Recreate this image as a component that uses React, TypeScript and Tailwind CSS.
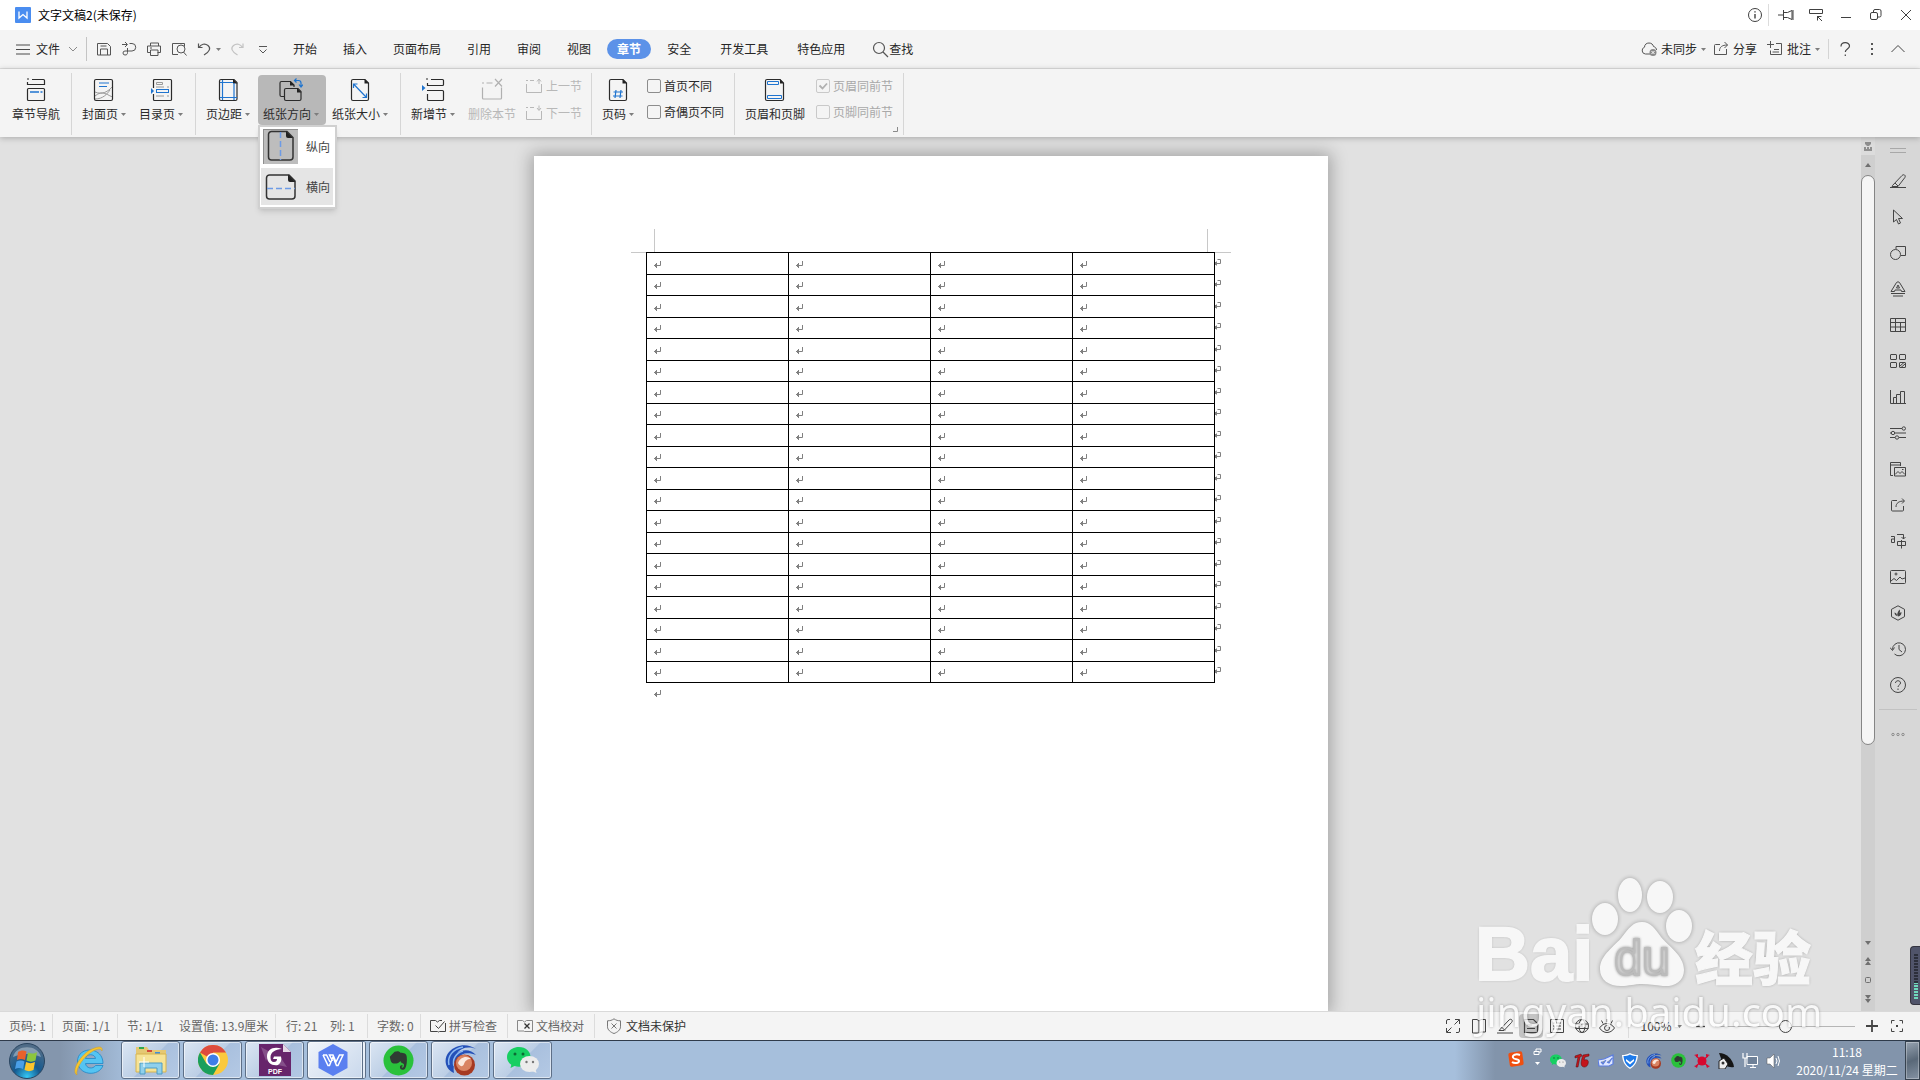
import React from 'react';

type IconProps = { size?: number; w?: number; h?: number; className?: string; children: React.ReactNode };

const Icon = ({ size = 16, w, h, className = '', children }: IconProps) => (
  <svg
    width={w ?? size}
    height={h ?? size}
    viewBox={`0 0 ${w ?? size} ${h ?? size}`}
    fill="none"
    stroke="currentColor"
    aria-hidden="true"
    className={`shrink-0 ${className}`}
  >
    {children}
  </svg>
);

const Caret = ({ className = 'text-[#7d7d7d]' }: { className?: string }) => (
  <Icon w={5} h={3} className={className}>
    <path d="M0 0h5L2.5 3z" fill="currentColor" stroke="none" />
  </Icon>
);

const BLUE = '#1f74cf';

/* ---------- title bar ---------- */

const TitleBar = () => (
  <header className="flex h-[30px] shrink-0 items-center bg-white pl-[15px] pr-[6px] text-[#404040]">
    <svg width="16" height="16" viewBox="0 0 16 16" aria-hidden="true">
      <rect width="16" height="16" rx="1" fill="#4a8df0" />
      <path d="M4 4.5v6.5l4-3.5 4 3.5V4.5" fill="none" stroke="#fff" strokeWidth="1.3" />
    </svg>
    <h1 className="ml-[7px] pb-px text-xs text-black">文字文稿2(未保存)</h1>
    <div className="ml-auto flex items-center">
      <button aria-label="信息" className="w-[21px]">
        <Icon>
          <circle cx="8" cy="8" r="6.5" />
          <path d="M8 7v4.5M8 4.2v1.4" strokeWidth="1.4" />
        </Icon>
      </button>
      <span className="h-[22px] w-px bg-[#dcdcdc]" />
      <button aria-label="固定" className="ml-[9px] w-[30px]">
        <Icon>
          <path d="M0 8h5M5.500 3v10M5.500 5.500h4l4.500-2v9l-4.500-2h-4M15 3v10" />
        </Icon>
      </button>
      <button aria-label="界面" className="w-[30px]">
        <Icon>
          <path d="M1.500 2.500h13v4h-13zM9 9.500h4.500M9.500 9.500v4M9.500 9.500l4.500 4.500" />
        </Icon>
      </button>
      <button aria-label="最小化" className="w-[30px]">
        <Icon>
          <path d="M3 10.500h10" />
        </Icon>
      </button>
      <button aria-label="还原" className="w-[30px]">
        <Icon>
          <rect x="2.500" y="5.500" width="7" height="7" rx="1.500" />
          <path d="M5.500 5V4a1.500 1.500 0 0 1 1.500-1.500h4.500A1.500 1.500 0 0 1 13 4v4.500a1.500 1.500 0 0 1-1.500 1.500H10" />
        </Icon>
      </button>
      <button aria-label="关闭" className="w-[16px]">
        <Icon>
          <path d="M3 3l10 10M13 3L3 13" />
        </Icon>
      </button>
    </div>
  </header>
);

/* ---------- menu bar ---------- */

const tabs = [
  { name: '开始' },
  { name: '插入' },
  { name: '页面布局' },
  { name: '引用' },
  { name: '审阅' },
  { name: '视图' },
  { name: '章节', active: true },
  { name: '安全' },
  { name: '开发工具', wide: true },
  { name: '特色应用', wide: true },
];

const MenuBar = () => (
  <nav className="flex h-[39px] shrink-0 items-center border-b border-[#dfdfdf] bg-[#f4f4f4] pl-[15px] pr-[14px] text-xs text-[#262626]">
    <button className="flex items-center gap-[5px]">
      <Icon className="text-[#4a4a4a]">
        <path d="M1 4h14M1 8.500h14M1 13h14" />
      </Icon>
      文件
      <Icon w={10} h={6} className="ml-[3px] text-[#8a8a8a]">
        <path d="M1 1l4 4 4-4" />
      </Icon>
    </button>
    <span className="ml-[8px] h-6 w-px bg-[#c4c4c4]" />
    <div className="ml-[9px] flex items-center gap-[9px] text-[#555]">
      <button aria-label="保存">
        <Icon>
          <path d="M1.500 2.500h10l3 3v8.500h-13zM4.500 14V8h7v6M4.500 5h6" />
        </Icon>
      </button>
      <button aria-label="输出">
        <Icon>
          <path d="M1 3.500h5M4 1l2.500 2.500L4 6M8.500 2.500h2.500a3.700 3.700 0 0 1 0 7.500H4a2 2 0 1 0 0 4c2 0 2.500-1 2.500-2.500V7" />
        </Icon>
      </button>
      <button aria-label="打印">
        <Icon>
          <path d="M4.500 5V2h8v3M4.500 11.500h-3v-6.500h13v6.500h-3M4.500 9h7.500v5.500H4.500zM4 7h2" />
        </Icon>
      </button>
      <button aria-label="打印预览">
        <Icon>
          <path d="M7 13.500H1.500v-11h12v3M12.500 11l3 3.500" />
          <circle cx="10" cy="8" r="4" />
        </Icon>
      </button>
      <button aria-label="撤销" className="flex items-center gap-1">
        <Icon>
          <path d="M2.500 2.500v4h4M3 6.500C5 3 9 2 12 4.500s2 6-4 9.500" strokeWidth="1.200" />
        </Icon>
        <Caret />
      </button>
      <button aria-label="恢复" className="text-[#c2c2c2]">
        <Icon>
          <path d="M13 2.500v4H9M12.500 6.500C10.500 3 6.500 2 3.500 4.500s-2 6 4 9.500" strokeWidth="1.200" />
        </Icon>
      </button>
      <button aria-label="更多">
        <Icon>
          <path d="M4 5.500h8M4.500 8.500l3.500 3.500 3.500-3.500" />
        </Icon>
      </button>
    </div>
    <div className="ml-[9px] flex items-center">
      {tabs.map((tab) => (
        <button
          key={tab.name}
          className={
            tab.active
              ? 'mx-[3px] h-5 rounded-full bg-[#5c92e8] px-[10px] font-bold text-white'
              : tab.wide
                ? 'h-5 pl-4 pr-[13px]'
                : 'h-5 px-[13px]'
          }
        >
          {tab.name}
        </button>
      ))}
    </div>
    <button className="ml-[14px] flex items-center">
      <Icon w={17} h={17} className="text-[#555]">
        <circle cx="7" cy="7" r="5.500" strokeWidth="1.200" />
        <path d="M11 11l5 5" strokeWidth="1.300" />
      </Icon>
      查找
    </button>

    <div className="ml-auto flex items-center">
      <button className="flex items-center gap-1">
        <Icon className="text-[#555]">
          <path d="M9 13H4.500a3.500 3.500 0 0 1-1-6.800C3.500 3.500 5.500 2 8 2s4 1.500 4.500 3.500c2 .5 3 2 3 3.500" />
          <circle cx="12" cy="11.500" r="3.500" fill="#888" stroke="none" />
          <path d="M10.500 10l3 3M13.500 10l-3 3" stroke="#fff" />
        </Icon>
        未同步
        <Caret />
      </button>
      <button className="ml-[7px] flex items-center gap-1">
        <Icon className="text-[#555]">
          <path d="M7 3.500H2.500a1 1 0 0 0-1 1v9h12V8M6.500 10c0-4 2.500-6 8-6M11.500 1l3 3-3 3" />
        </Icon>
        分享
      </button>
      <button className="ml-[10px] flex items-center gap-1">
        <Icon className="text-[#555]">
          <path d="M3.500 0v7M0 3.500h7M9 2.500h5.500v11h-11V9.500M7 8.500h5M5.500 11h6.500" />
        </Icon>
        批注
        <Caret />
      </button>
      <span className="ml-2 h-5 w-px bg-[#d4d4d4]" />
      <button aria-label="帮助" className="ml-2">
        <Icon>
          <path d="M4 5.500c0-5 8.500-5 8.500-.5 0 3-4.200 3-4.200 6M8.300 13.500V15" stroke="#444" strokeWidth="1.200" />
        </Icon>
      </button>
      <button aria-label="更多选项" className="ml-[11px]">
        <Icon>
          <path d="M7 2h2v2H7zM7 7h2v2H7zM7 12h2v2H7z" fill="#555" stroke="none" />
        </Icon>
      </button>
      <button aria-label="收起功能区" className="ml-[10px]">
        <Icon>
          <path d="M1.500 11L8 4.500l6.500 6.500" stroke="#444" />
        </Icon>
      </button>
    </div>
  </nav>
);

/* ---------- ribbon ---------- */

const BigButton = ({
  label,
  caret,
  className,
  children,
  disabled,
}: {
  label: string;
  caret?: boolean;
  className: string;
  children: React.ReactNode;
  disabled?: boolean;
}) => (
  <button
    disabled={disabled}
    className={`flex h-[50px] flex-col items-center rounded-[4px] pt-[3px] disabled:text-[#b8b8b8] ${className}`}
  >
    <Icon size={24}>{children}</Icon>
    <span className="mt-[2px] flex items-center gap-[3px] whitespace-nowrap text-xs leading-5">
      {label}
      {caret && <Caret />}
    </span>
  </button>
);

const Check = ({ label, checked, disabled }: { label: string; checked?: boolean; disabled?: boolean }) => (
  <label className={`flex items-center gap-[3px] text-xs leading-5 ${disabled ? 'text-[#a9a9a9]' : ''}`}>
    <span className="grid">
      <input
        type="checkbox"
        defaultChecked={checked}
        disabled={disabled}
        className="col-start-1 row-start-1 size-[14px] appearance-none rounded-[2px] border border-[#8c8c8c] disabled:border-[#c9c9c9]"
      />
      {checked && (
        <Icon size={14} className="col-start-1 row-start-1 text-[#b0b0b0]">
          <path d="M3.500 6.500l3 3 4.500-5" strokeWidth="1.800" />
        </Icon>
      )}
    </span>
    {label}
  </label>
);

const group = 'flex h-[62px] items-start border-r border-[#d6d6d6] pt-[2px]';

const OrientationMenu = () => (
  <ul className="absolute left-0 top-full z-20 w-[79px] border-2 border-[#d0d0d0] bg-white pb-[2px] pl-px pr-[2px] pt-px shadow-md">
    <li>
      <button className="flex h-[37px] w-full items-center gap-2 pl-[2px] text-xs text-[#444]">
        <span className="flex h-[35px] w-[35px] justify-center border-l border-t border-[#8f8f8f] bg-[#bdbdbd]">
          <Icon w={28} h={32} className="text-[#333]">
            <path d="M4.500 1.500H20l6 6V27a3 3 0 0 1-3 3H4.500a3 3 0 0 1-3-3V4.500a3 3 0 0 1 3-3z" strokeWidth="1.500" />
            <path d="M19 1l7 7h-5a2 2 0 0 1-2-2z" fill="#222" stroke="none" />
            <path d="M13.500 2v28" stroke="#6d9be6" strokeWidth="1.500" strokeDasharray="6 3" />
          </Icon>
        </span>
        纵向
      </button>
    </li>
    <li className="mt-[3px]">
      <button className="flex h-[37px] w-full items-center gap-2 bg-[#e5e5e5] pl-[2px] text-xs text-[#444]">
        <span className="flex w-[35px] justify-center">
          <Icon w={32} h={28} className="text-[#333]">
            <path d="M4.500 2H24l6 6v15a3 3 0 0 1-3 3H4.500a3 3 0 0 1-3-3V5a3 3 0 0 1 3-3z" strokeWidth="1.500" />
            <path d="M23 1.500L30.500 9H25a2 2 0 0 1-2-2z" fill="#222" stroke="none" />
            <path d="M2 15.500h28" stroke="#6d9be6" strokeWidth="1.500" strokeDasharray="6 3" />
          </Icon>
        </span>
        横向
      </button>
    </li>
  </ul>
);

const Ribbon = () => (
  <section className="relative z-10 flex h-[68px] shrink-0 items-start bg-[#f4f4f4] pt-1 text-[#2b2b2b] shadow-[0_1px_6px_rgba(0,0,0,0.25)]">
    <div className={`${group} w-[72px] pl-px`}>
      <BigButton label="章节导航" className="w-full">
        <path d="M3 1h2M8 1.500h11.500a1 1 0 0 1 1 1v4h-17V4" strokeWidth="1.200" />
        <rect x="3.500" y="10.500" width="17" height="12" rx="1" strokeWidth="1.200" />
        <path d="M6 14h9M16.500 14h2" stroke={BLUE} strokeWidth="1.400" />
      </BigButton>
    </div>
    <div className={`${group} w-[124px] pl-1`}>
      <BigButton label="封面页" caret className="w-14">
        <path d="M3 14c7 3 13 0 18-6M3 18c8-7 13 0 18 1M3 21c8 0 12-5 15-9" stroke="#9a9a9a" />
        <rect x="2.500" y="1.500" width="18" height="21" rx="1.500" strokeWidth="1.200" />
        <path d="M7 5h10M7 8.500h8" stroke={BLUE} strokeWidth="1.200" />
      </BigButton>
      <BigButton label="目录页" caret className="w-[58px]">
        <path d="M4.500 10V2.500a1 1 0 0 1 1-1h16a1 1 0 0 1 1 1v19a1 1 0 0 1-1 1h-16a1 1 0 0 1-1-1V16" strokeWidth="1.200" />
        <path d="M7.500 4.500h6v2h-6zM7 9h8M18 9h2M7 18h8M18 18h2" stroke="#9a9a9a" />
        <rect x="7.500" y="11.500" width="12" height="3" stroke={BLUE} />
        <path d="M2 10l3 3-3 3z" fill={BLUE} stroke="none" />
      </BigButton>
    </div>
    <div className={`${group} w-[205px] pl-1`}>
      <BigButton label="页边距" caret className="w-14">
        <path d="M5 1.500h13l3 3V21a1.500 1.500 0 0 1-1.500 1.500H5A1.500 1.500 0 0 1 3.500 21V3A1.500 1.500 0 0 1 5 1.500z" strokeWidth="1.200" />
        <path d="M17 1l4.500 4.500H17z" fill="#222" stroke="none" />
        <path d="M6.500 2v20M18 5v17M4 4.500h13M4 19.500h17" stroke={BLUE} strokeWidth="1.200" />
      </BigButton>
      <div className="relative ml-[2px]">
        <BigButton label="纸张方向" caret className="w-[68px] bg-[#b8b8b8] pr-[2px]">
          <path d="M5 18.500H2.500A1.500 1.500 0 0 1 1 17V5a1.500 1.500 0 0 1 1.500-1.500h9L15 7v2" strokeWidth="1.200" />
          <path d="M11 3l4.500 4.500H11z" fill="#222" stroke="none" />
          <path d="M7 10.500h12l3 3V21a1.500 1.500 0 0 1-1.500 1.500H7A1.500 1.500 0 0 1 5.500 21v-9A1.500 1.500 0 0 1 7 10.500z" strokeWidth="1.200" />
          <path d="M18 10l4.500 4.500H18z" fill="#222" stroke="none" />
          <path d="M16 2.500h3.500a2.500 2.500 0 0 1 2.500 2.500v3.500M17.500.5l-2 2 2 2M20 6.500l2 2.500 2-2.500" stroke={BLUE} strokeWidth="1.200" />
        </BigButton>
        <OrientationMenu />
      </div>
      <BigButton label="纸张大小" caret className="w-[68px]">
        <path d="M5 1.500h12l3.500 3.500v16a1.500 1.500 0 0 1-1.500 1.500H5A1.500 1.500 0 0 1 3.500 21V3A1.500 1.500 0 0 1 5 1.500z" strokeWidth="1.200" />
        <path d="M16.500 1L21 5.500h-4.500z" fill="#222" stroke="none" />
        <path d="M6 6.500l12 12.500M5.500 10V6h4M18.500 15.500v4h-4" stroke={BLUE} strokeWidth="1.200" />
      </BigButton>
    </div>
    <div className={`${group} w-[191px] pl-1`}>
      <BigButton label="新增节" caret className="w-14">
        <path d="M5 1h2M10 1.500h11.500a1 1 0 0 1 1 1v4a1 1 0 0 1-1 1h-15V5M6 12.500h15.500a1 1 0 0 1 1 1v8a1 1 0 0 1-1 1h-14a1 1 0 0 1-1-1V16" strokeWidth="1.200" />
        <path d="M1 7l3.500 3L1 13z" fill={BLUE} stroke="none" />
      </BigButton>
      <BigButton label="删除本节" disabled className="w-[62px]">
        <path d="M2 5h2M6.500 5h6M2.500 9.500V20a1 1 0 0 0 1 1h17a1 1 0 0 0 1-1V9.500M15 1l7 7.500M22 1l-7 7.500" stroke="#b0b0b0" strokeWidth="1.200" />
      </BigButton>
      <div className="flex flex-col gap-[7px] pl-[2px] pt-px text-xs leading-5 text-[#b8b8b8]">
        <button disabled className="flex items-center gap-[4px]">
          <Icon w={17} h={16}>
            <path d="M1 2.500h2M5 2.500h4M1.500 6v8.500h15V6M14 6V1.500M12 3.500l2-2.500 2 2.500" />
          </Icon>
          上一节
        </button>
        <button disabled className="flex items-center gap-[4px]">
          <Icon w={17} h={16}>
            <path d="M1 2.500h2M5 2.500h4M1.500 6v8.500h15V6M14 .5V5M12 3l2 2.500L16 3" />
          </Icon>
          下一节
        </button>
      </div>
    </div>
    <div className={`${group} w-[143px] pl-[3px]`}>
      <BigButton label="页码" caret className="w-[46px]">
        <path d="M5 1.500h12l3.500 3.500v16a1.500 1.500 0 0 1-1.500 1.500H5A1.500 1.500 0 0 1 3.500 21V3A1.500 1.500 0 0 1 5 1.500z" strokeWidth="1.200" />
        <path d="M16.500 1L21 5.500h-4.500z" fill="#222" stroke="none" />
        <path d="M10 12l-1 8M15 12l-1 8M7.500 14h9.500M7 18h9.500" stroke={BLUE} strokeWidth="1.200" />
      </BigButton>
      <div className="flex flex-col gap-[6px] pl-[6px] pt-px">
        <Check label="首页不同" />
        <Check label="奇偶页不同" />
      </div>
    </div>
    <div className={`${group} w-[169px] pl-[5px]`}>
      <BigButton label="页眉和页脚" className="w-[70px]">
        <path d="M4 1.500h13l3.500 3.500v16a1.500 1.500 0 0 1-1.500 1.500H4A1.500 1.500 0 0 1 2.500 21V3A1.500 1.500 0 0 1 4 1.500z" strokeWidth="1.200" />
        <path d="M17 1l4 4.500h-4z" fill="#222" stroke="none" />
        <path d="M4.500 3.500h11v3h-11zM4.500 17.500h14v3h-14z" stroke={BLUE} />
      </BigButton>
      <div className="flex flex-col gap-[6px] pl-[6px] pt-px">
        <Check label="页眉同前节" checked disabled />
        <Check label="页脚同前节" disabled />
      </div>
      <button aria-label="对话框" className="mt-auto pb-[2px]">
        <Icon size={6} className="text-[#8a8a8a]">
          <path d="M4.500 0v4.500H0" />
        </Icon>
      </button>
    </div>
  </section>
);

/* ---------- document ---------- */

const ParagraphMark = () => (
  <Icon size={8} className="block text-[#808080]">
    <path d="M6.500 0v4.500H0M2.500 2v5M1.500 3v3" />
  </Icon>
);

const RowEndMark = () => (
  <Icon w={7} h={8} className="block text-[#808080]">
    <path d="M2.500 .5h3v4H0M1.500 2.500v4M.5 3v3" />
  </Icon>
);

const rows = Array.from({ length: 20 });
const columns = ['A', 'B', 'C', 'D'];

const Page = () => (
  <main className="mx-auto mt-[19px] w-[794px] shrink-0 self-stretch bg-white shadow-[0_0_16px_3px_rgba(0,0,0,0.28)]">
    <div className="mx-[97px] flex h-[97px] items-end border-b border-[#c8c8c8]">
      <div className="mx-[23px] h-[23px] flex-1 border-x border-[#c8c8c8]" />
    </div>
    <table className="relative ml-[112px] -mt-px table-fixed border-collapse">
      <colgroup>
        {columns.map((c) => (
          <col key={c} className="w-[142px]" />
        ))}
        <col className="w-2" />
      </colgroup>
      <tbody>
        {rows.map((_, i) => (
          <tr key={i} className="h-[22px] even:h-[21px]">
            {columns.map((c) => (
              <td key={c} className="border border-black p-0 pb-[5px] pl-[7px] align-bottom">
                <ParagraphMark />
              </td>
            ))}
            <td className="p-0 pb-[8px] align-bottom">
              <RowEndMark />
            </td>
          </tr>
        ))}
      </tbody>
    </table>
    <div className="ml-[120px] mt-[7px]">
      <ParagraphMark />
    </div>
  </main>
);

const ScrollBar = () => (
  <div className="flex w-[14px] shrink-0 flex-col items-center bg-[#cfcfcf] text-[#707070]">
    <div className="flex h-[18px] w-full items-center justify-center bg-[#dcdcdc]">
      <Icon w={8} h={9}>
        <path d="M1 0h6v2L5 4H3L1 2zM0 5h2v2h1V5h2v2h1V5h2v4H0z" fill="#8f8f8f" stroke="none" />
      </Icon>
    </div>
    <div className="flex h-5 items-center">
      <Icon w={6} h={4}>
        <path d="M3 0l3 4H0z" fill="currentColor" stroke="none" />
      </Icon>
    </div>
    <div className="h-[570px] w-full rounded-full border border-[#858585] bg-[#f5f5f5]" />
    <div className="mt-auto flex flex-col items-center gap-3 pb-2">
      <Icon w={6} h={4}>
        <path d="M0 0h6L3 4z" fill="currentColor" stroke="none" />
      </Icon>
      <Icon w={6} h={8}>
        <path d="M3 0l3 4H0zM3 4l3 4H0z" fill="currentColor" stroke="none" />
      </Icon>
      <Icon w={6} h={6}>
        <rect x=".5" y=".5" width="5" height="5" rx="1" />
      </Icon>
      <Icon w={6} h={8}>
        <path d="M0 0h6L3 4zM0 4h6L3 8z" fill="currentColor" stroke="none" />
      </Icon>
    </div>
  </div>
);

const sideTools = [
  { name: '编辑', icon: <path d="M0 14.500h16M2.500 12.500L12 2.500c1-1 2.500-1 3 0s0 2-.5 2.500L8 13.500H2zM5 10l3 3" /> },
  { name: '选择', icon: <path d="M3.500 1v12l3-2.500 2 4.500 2-1-2-4.500h4z" /> },
  {
    name: '形状',
    icon: (
      <>
        <circle cx="5.500" cy="9.500" r="5" />
        <path d="M6 4V1.500h9.500v9H11" />
      </>
    ),
  },
  { name: '艺术字', icon: <path d="M1 10.500L6.500 1.500q1.500-1.500 3 0L15 10.500h-3.500L11 9H5l-.5 1.500zM6.500 7L8 4l1.500 3zM1 12.500h14M3 15h10" /> },
  { name: '表格', icon: <path d="M.5 1.500h15v13H.5zM.5 5.500h15M.5 10h15M5.500 2v12.500M10.500 5.500v9" /> },
  {
    name: '组件',
    icon: (
      <>
        <rect x=".5" y="1.500" width="6" height="5" rx=".5" />
        <rect x="9.500" y="1.500" width="6" height="5" rx=".5" />
        <rect x=".5" y="9.500" width="6" height="5" rx=".5" />
        <rect x="9.500" y="9.500" width="6" height="5" rx=".5" />
        <path d="M10 13l4-3.500M11 14.500l4-3.500" />
      </>
    ),
  },
  { name: '图表', icon: <path d="M.5 1v13.500H16M3.500 14V8.500h3V14M6.500 8.500v-3h4V14M10.500 5.500v-3h4V14" /> },
  {
    name: '设置',
    icon: (
      <>
        <path d="M0 3.500h12M5 8h11M0 8h1M0 12.500h5M9 12.500h7" />
        <circle cx="13.800" cy="3.500" r="1.700" />
        <circle cx="3" cy="8" r="1.700" />
        <circle cx="7" cy="12.500" r="1.700" />
      </>
    ),
  },
  { name: '图库', icon: <path d="M3 14.500H.5v-13h10V5M.5 4h10M4.500 6.500h11v8.500h-11zM5 13.500l3-3 2 2 2-2 3 3M12 8.500h1.500" /> },
  { name: '分享', icon: <path d="M7 3.500H2.500a1 1 0 0 0-1 1V13a1 1 0 0 0 1 1h10a1 1 0 0 0 1-1V9M6 10c0-4 3-6 8-6M12 1.500L14.500 4 12 6.500" /> },
  { name: '翻译', icon: <path d="M1 3.500h3.500v6H1.500V6h3M7 1.500h6.500V6M11.500 4l2 2 2-2M11.500 7v8.500M7.500 8.500h8v4h-8z" /> },
  {
    name: '图片',
    icon: (
      <>
        <rect x=".5" y="1.500" width="15" height="13" rx="1" />
        <path d="M1 12l3-2.500 2.500 2L10 8l2 2 3-1" />
        <circle cx="6" cy="5" r="1" />
      </>
    ),
  },
  {
    name: '稻壳',
    icon: (
      <>
        <path d="M8 .8l6.500 3.500v7.400L8 15.200 1.500 11.700V4.300z" />
        <path d="M8 11.500C6.500 10 7.500 7 9.500 4.500c.8 1.500.5 2.500 0 3.500l2-1c0 2.500-1 4-3.500 4.500zM4.500 7.500c2 .5 2.500 1.500 2.500 3.500-1.500-.5-2.500-1.500-2.500-3.500z" fill="currentColor" stroke="none" />
      </>
    ),
  },
  { name: '历史', icon: <path d="M2.500 8.500a6.500 6.500 0 1 1 2 4.500M0 6.500l2.500 3 2-3M9 4v4.500l3 2.500" /> },
  {
    name: '帮助',
    icon: (
      <>
        <circle cx="8" cy="8" r="7.500" />
        <path d="M5.500 6c0-3 5-3 5 0 0 2-2.500 2-2.500 4M8 11.500V13" />
      </>
    ),
  },
];

const SidePanel = () => (
  <aside className="flex w-[45px] shrink-0 flex-col items-center bg-[#d7d7d7] pt-[11px] text-[#454545]">
    <div className="h-[5px] w-4 border-y border-[#a8a8a8]" />
    <div className="mt-[10px] flex flex-col">
      {sideTools.map((tool) => (
        <button key={tool.name} aria-label={tool.name} className="flex h-9 items-center">
          <Icon>{tool.icon}</Icon>
        </button>
      ))}
    </div>
    <hr className="mt-[6px] w-[38px] border-[#c2c2c2]" />
    <button aria-label="更多" className="mt-[22px]">
      <Icon w={14} h={5} className="text-[#8a8a8a]">
        <circle cx="2" cy="2.500" r="1.200" />
        <circle cx="7" cy="2.500" r="1.200" />
        <circle cx="12" cy="2.500" r="1.200" />
      </Icon>
    </button>
  </aside>
);

/* ---------- status bar ---------- */

const sep = 'border-r border-[#dcdcdc]';

const StatusBar = () => (
  <footer className="flex h-[29px] shrink-0 items-center border-t border-[#d9d9d9] bg-[#f4f4f4] text-xs leading-6 text-[#666]">
    <span className={`w-[53px] pl-[9px] ${sep}`}>页码: 1</span>
    <span className={`w-[65px] pl-[9px] ${sep}`}>页面: 1/1</span>
    <span className="w-[61px] pl-[9px]">节: 1/1</span>
    <span className={`w-[97px] whitespace-nowrap ${sep}`}>设置值: 13.9厘米</span>
    <span className="w-[54px] pl-[10px]">行: 21</span>
    <span className={`w-[38px] ${sep}`}>列: 1</span>
    <span className={`w-[53px] pl-[9px] ${sep}`}>字数: 0</span>
    <button className={`flex w-[87px] items-center gap-[3px] pl-[9px] ${sep}`}>
      <Icon className="text-[#444]">
        <path d="M7.500 13.500H.5v-11h5l2 1.500 2-1.500H12M9.500 13.500l-1 .5-1-.5M9.500 13.500h6V5M5.500 7.500l3 3 6-7" />
      </Icon>
      拼写检查
    </button>
    <button className={`flex w-[87px] items-center gap-[3px] pl-[9px] ${sep}`}>
      <Icon className="text-[#888]">
        <path d="M.5 2.500h5l2 1.500 2-1.500h6v11h-8L7 13H.5z" />
        <path d="M7.500 5.500l5 5M12.500 5.500l-5 5" stroke="#333" strokeWidth="1.300" />
      </Icon>
      文档校对
    </button>
    <button className="flex items-center gap-1 pl-[11px] text-[#333]">
      <Icon className="text-[#777]">
        <path d="M8 .8c2 1.500 4 2 6.500 2v6c0 3-3 5.500-6.500 6.700C4.500 14.300 1.500 11.800 1.500 8.800v-6C4 2.800 6 2.300 8 .8zM5.500 5.500l5 5M10.500 5.500l-5 5" />
      </Icon>
      文档未保护
    </button>

    <div className="ml-auto flex items-center text-[#444]">
      <button aria-label="全屏" className="mr-[10px]">
        <Icon>
          <path d="M1.500 6V3a1.500 1.500 0 0 1 1.500-1.500h2M10 1.500h4.500V6M14.500 10v3a1.500 1.500 0 0 1-1.500 1.500h-2M6 14.500H1.500V10M14 2L9.500 6.500M2 14l4.500-4.500" />
        </Icon>
      </button>
      <button aria-label="阅读版式" className="mr-[10px]">
        <Icon>
          <path d="M1.500 1.500h4.500L8 3v12H1.500zM8 3l2-1.500h4.500V14H10l-2 1" />
        </Icon>
      </button>
      <button aria-label="写作模式" className="mr-[6px]">
        <Icon>
          <path d="M0 15h16M2.500 12L12 2c1-1 2.500-1 3 0s0 2-.5 2.500L7 12.500H2zM5 9.500l3 3" />
        </Icon>
      </button>
      <button aria-label="页面视图" className="mr-[6px] flex h-6 w-6 items-center justify-center rounded bg-[#c4c4c4]">
        <Icon>
          <path d="M1.500 1.500h9l4 4v9h-13zM4 7h5M4 10.500h8" strokeWidth="1.200" />
        </Icon>
      </button>
      <button aria-label="大纲" className="mr-[9px]">
        <Icon>
          <path d="M1.500 1.500h13v13h-13zM4 5h1.500M7 5h5M4 8h1.500M7 8h5M4 11h1.500M7 11h5" />
        </Icon>
      </button>
      <button aria-label="Web版式" className="mr-[9px]">
        <Icon>
          <circle cx="8" cy="8" r="6.500" />
          <ellipse cx="8" cy="8" rx="3" ry="6.500" />
          <path d="M1.500 6h13M1.500 10.500h13" />
        </Icon>
      </button>
      <button aria-label="护眼模式" className="mr-[13px]">
        <Icon>
          <path d="M.5 10c4-6 11-6 15 0-4 6-11 6-15 0zM8 1v3M2.500 2.500l1.500 3M13.500 2.500L12 5.500" />
          <circle cx="8" cy="10" r="2.500" />
        </Icon>
      </button>
      <span className="h-6 w-px bg-[#dcdcdc]" />
      <button className="ml-[11px] flex items-center gap-[5px]">
        <span className="w-8">100%</span>
        <Caret />
      </button>
      <button aria-label="缩小" className="ml-[12px]">
        <Icon w={12} h={12}>
          <path d="M2 6.500h9" strokeWidth="1.300" />
        </Icon>
      </button>
      <input
        type="range"
        aria-label="缩放"
        defaultValue={50}
        className="ml-[9px] h-4 w-[140px] appearance-none bg-transparent [&::-webkit-slider-runnable-track]:h-px [&::-webkit-slider-runnable-track]:bg-[#b5b5b5] [&::-webkit-slider-thumb]:-mt-[6px] [&::-webkit-slider-thumb]:size-[13px] [&::-webkit-slider-thumb]:appearance-none [&::-webkit-slider-thumb]:rounded-full [&::-webkit-slider-thumb]:border [&::-webkit-slider-thumb]:border-[#444] [&::-webkit-slider-thumb]:bg-[#f4f4f4]"
      />
      <button aria-label="放大" className="ml-[10px]">
        <Icon w={14} h={14}>
          <path d="M7 1v12M1 7h12" strokeWidth="1.800" />
        </Icon>
      </button>
      <button aria-label="适应窗口" className="ml-[11px] mr-4">
        <Icon w={14} h={14}>
          <path d="M1.500 4.500v-3h3M9.500 1.500h3v3M12.500 9.500v3h-3M4.500 12.500h-3v-3" />
          <path d="M6 6h2v2H6z" fill="currentColor" stroke="none" />
        </Icon>
      </button>
    </div>
  </footer>
);

/* ---------- taskbar ---------- */

const SwirlLogo = ({ className }: { className: string }) => (
  <svg viewBox="0 0 32 32" className={className} aria-hidden="true">
    <path d="M9 29C0 25-2 15 4 8 11 0 23-1 31 5c-8-3-15-1-19 4 6-4 14-4 19 2-8-3-15-2-19 4-3 4-4 9-3 14z" fill="#2450b8" />
    <path d="M4 21C2 12 8 5 18 3M9 22c-2-7 2-13 9-15" fill="none" stroke="#8cb9f2" strokeWidth="1.500" />
    <circle cx="19.500" cy="21" r="10.500" fill="#a63a22" />
    <circle cx="19" cy="19" r="8" fill="#d98463" />
    <path d="M13 19c2-6 9-8 13-4-4 0-6 2-7 5s-4 3-6-1z" fill="#fbe9df" />
  </svg>
);

const WeChatLogo = ({ className }: { className: string }) => (
  <svg viewBox="0 0 32 26" className={className} aria-hidden="true">
    <path d="M12 0C5 0 0 4.500 0 10c0 3.200 1.600 6 4.300 7.800L3.500 21l4-2a14 14 0 0 0 4.500.8c7 0 11.500-4.300 11.500-9.800S19 0 12 0z" fill="#17cf62" />
    <ellipse cx="22.500" cy="17" rx="9.500" ry="8" fill="#ececec" />
    <path d="M25 24l4.500 2-1-4z" fill="#ececec" />
    <circle cx="8" cy="7" r="1.500" fill="#0c6b34" />
    <circle cx="16" cy="7" r="1.500" fill="#0c6b34" />
    <circle cx="19.500" cy="15" r="1.200" fill="#777" />
    <circle cx="26" cy="15" r="1.200" fill="#777" />
  </svg>
);

const EvernoteLogo = ({ className }: { className: string }) => (
  <svg viewBox="0 0 32 32" className={className} aria-hidden="true">
    <circle cx="16" cy="16" r="15.500" fill="#2ac13b" />
    <path
      d="M7 12l5-5c3-1 5-.5 6 1 4 0 6 1 6.500 4 .5 4 0 9-1.500 12-1.500 2.500-6 2-5.500-1.500.5-2 3-2 3-.5-1 0-1.500.5-1 1.500 2 0 2.500-2.500 2-4-2-1-3-1-3.500-3-1.500 2.500-6 3.500-8.500 2-1.500-1-2-4-2.500-6.500z"
      fill="#2f3b33"
    />
  </svg>
);

const FolderLogo = () => (
  <svg width="32" height="30" viewBox="0 0 32 30" aria-hidden="true">
    <path d="M1 2h11l2 3h17v21H1z" fill="#e5c873" />
    <path d="M4 2h5v2H4z" fill="#2fa84f" />
    <path d="M12 5h5v2h-5z" fill="#d4493a" />
    <path d="M20 7h5v2h-5z" fill="#3f8fd8" />
    <path d="M1 9h30v18H1z" fill="#f6e396" stroke="#d6b451" />
    <path d="M5 29V18h22v11h-5v-6H10v6z" fill="#8fd0ec" stroke="#4d9cc4" />
    <path d="M9 12v10M4 17h10" stroke="#fff" />
  </svg>
);

const ChromeLogo = () => (
  <svg width="30" height="30" viewBox="0 0 30 30" aria-hidden="true">
    <circle cx="15" cy="15" r="15" fill="#fbc93d" />
    <path d="M15 15L2 7.500A15 15 0 0 1 28 7.500H15z" fill="#dd4b3e" />
    <path d="M2 7.500A15 15 0 0 0 15 30l6.500-11.250L15 15 8.500 18.750z" fill="#1a9f5c" />
    <circle cx="15" cy="15" r="7" fill="#fff" />
    <circle cx="15" cy="15" r="5.500" fill="#3f7ee8" />
  </svg>
);

const PdfLogo = () => (
  <svg width="32" height="32" viewBox="0 0 32 32" aria-hidden="true">
    <path d="M0 0h24l8 8v24H0z" fill="#67246b" />
    <path d="M2 3l9 5-4 9zM22 14l6 9-9-2z" fill="#85508a" />
    <path d="M24 0v8h8z" fill="#e4d8e6" />
    <path d="M23 5c-8-3-15 0-15 7.500C8 19 13 22 19 21c3-2 4-5 3-8.500h-7l-1 2.500h4c0 2-1 3-3 3-2.500 0-3.500-2-3.500-4.500C11.500 8 16 5.500 23 5z" fill="#fff" />
    <text x="16" y="30" textAnchor="middle" fontSize="7" fontWeight="700" fill="#fff" fontFamily="Liberation Sans, sans-serif">
      PDF
    </text>
  </svg>
);

const WpsLogo = () => (
  <svg width="30" height="32" viewBox="0 0 30 32" aria-hidden="true">
    <path d="M15 0l14.500 8v16L15 32 .5 24V8z" fill="#5a7ff0" />
    <path d="M5 11l5 10.500h1.500L15 13l3.500 8.500H20L25 11h-3.500l-3.500 7-3-7h-3.500l3 6M5 11h3.500l3.500 7" fill="none" stroke="#fff" strokeWidth="1.500" />
  </svg>
);

const pinned = [
  { name: '资源管理器', icon: <FolderLogo /> },
  { name: 'Chrome', icon: <ChromeLogo /> },
  { name: 'PDF', icon: <PdfLogo /> },
  { name: 'WPS', icon: <WpsLogo />, active: true },
  { name: '印象笔记', icon: <EvernoteLogo className="size-[31px]" /> },
  { name: '浏览器', icon: <SwirlLogo className="size-8" /> },
  { name: '微信', icon: <WeChatLogo className="h-[26px] w-8" /> },
];

const tray = [
  { name: '微信', logo: true, icon: <WeChatLogo className="h-[14px] w-4" /> },
  {
    name: '字体',
    icon: <path d="M1 3l6-2 1 2-2 1-2 10H2L4 4 1 5zM9 2l6-1v2l-4 1-1 3c4-1 5 1 4 4s-4 4-6 2 0-8 1-11z" fill="#c4141c" stroke="#5a0a0a" strokeWidth=".5" />,
  },
  { name: '云盘', icon: <path d="M0 7l6-1 9-4v9l-4 2H1zM3 9l2 2 3-4M9 9l2 1 3-5" fill="#dfe7ff" stroke="#5b7de0" strokeWidth="1.200" /> },
  {
    name: '管家',
    icon: (
      <>
        <path d="M8 0c3 1.500 5 2 8 2-.5 7-3 11-8 14C3 13 .5 9 0 2c3 0 5-.5 8-2z" fill="#fff" />
        <path d="M8 1.500c2 1 4 1.500 6.500 1.500-.5 5.500-2.500 9-6.500 11.500C4 12 2 8.500 1.500 3 4 3 6 2.500 8 1.500z" fill="#1f7bea" />
        <path d="M4 6l4 3 4-3v2l-4 3.500L4 8z" fill="#fff" />
      </>
    ),
  },
  { name: '浏览器', logo: true, icon: <SwirlLogo className="size-4" /> },
  { name: '印象笔记', logo: true, icon: <EvernoteLogo className="size-[15px]" /> },
  {
    name: '节点',
    icon: (
      <>
        <circle cx="8" cy="8" r="4.500" fill="#d6082f" />
        <path d="M2 3l12 10M14 3L2 13" stroke="#d6082f" strokeWidth="1.200" />
        <path d="M0 2l4-1v3zM16 2l-4-1v3zM0 13l4-1-1 3zM16 13l-4-1 1 3z" fill="#d6082f" />
      </>
    ),
  },
  {
    name: '卫星',
    icon: (
      <>
        <path d="M1 0c7 0 14 6 15 14-6 1-10-2-12-6z" fill="#151515" />
        <path d="M1 8l5-3 4 6-3 5H1z" fill="#eee" stroke="#222" />
        <circle cx="5" cy="10" r="1.500" fill="#333" />
      </>
    ),
  },
  {
    name: '网络',
    icon: (
      <>
        <path d="M5 3.500h10.500v8H5zM8 14.500h6M11 12v2" fill="#6f8198" stroke="#fff" />
        <path d="M1 0v5h4V0M3 5v9" fill="none" stroke="#fff" strokeWidth="1.200" />
      </>
    ),
  },
  {
    name: '音量',
    icon: (
      <>
        <path d="M1 5h3l4-4v14l-4-4H1z" fill="#fff" stroke="#555" strokeWidth=".5" />
        <path d="M10 5q2 3 0 6M12 3q3 5 0 10" fill="none" stroke="#fff" />
      </>
    ),
  },
];

const Taskbar = () => (
  <footer className="flex h-10 shrink-0 items-stretch border-t border-[#2f3b4b] bg-[linear-gradient(90deg,#8496ad_0,#8496ad_60px,#a6bfdc_130px,#a6bfdc_calc(100%_-_465px),#8294ab_calc(100%_-_425px),#8294ab_100%)]">
    <button aria-label="开始菜单" className="ml-[9px] self-center">
      <svg width="36" height="36" viewBox="0 0 36 36" aria-hidden="true">
        <defs>
          <radialGradient id="orb" cx="50%" cy="95%" r="85%">
            <stop offset="0" stopColor="#35c8f5" />
            <stop offset=".45" stopColor="#14598f" />
            <stop offset="1" stopColor="#4f6c88" />
          </radialGradient>
        </defs>
        <circle cx="18" cy="18" r="17.500" fill="url(#orb)" stroke="#2a4560" />
        <path d="M4 14C7 1 29 1 32 14c-9-4-19-4-28 0z" fill="#fff" opacity=".35" />
        <path d="M9 9c3-2 6-2 8.500-.5L16 17c-3-1.500-5.500-1.500-8 0z" fill="#e8622c" />
        <path d="M19 9.500c3 1.500 6 1.500 9-.5l-1.500 8.500c-3 1.500-6 1.500-9 0z" fill="#8cc63e" />
        <path d="M7.500 18.500c3-1.500 5.500-1.500 8 0L14 26c-3-1.500-5-1.500-8 0z" fill="#4a9fe8" />
        <path d="M17 19c3 1.500 6 1.500 9 0l-1.500 8c-3 1.500-6 1.500-9 0z" fill="#fbc52d" />
      </svg>
    </button>
    <button aria-label="Internet Explorer" className="ml-7 self-center">
      <svg width="32" height="32" viewBox="0 0 32 32" aria-hidden="true">
        <path d="M30 18.500H12.500c.5 5 7.500 6 10 2H30C26 32 5 31 4.500 16 5 1 30 1 30 18.500zM12.500 13.500h10c-.5-5-9.500-5-10 0z" fill="#55c4f2" stroke="#1e86c6" strokeWidth=".8" />
        <path d="M4 30C-3 26 9 8 19 4c7-3 11-3 10 2-1-3-5-2-9 0C11 11 2 24 4 30z" fill="#f7c62f" stroke="#d59c16" strokeWidth=".5" />
      </svg>
    </button>
    <div className="ml-4 flex gap-[3px] pb-px">
      {pinned.map((app) => (
        <button
          key={app.name}
          aria-label={app.name}
          className={`flex w-[59px] items-center justify-center rounded-[3px] border border-[#5d6f87] shadow-[inset_0_0_0_1px_rgba(255,255,255,0.55)] ${
            app.active
              ? 'border-r-4 border-double bg-[linear-gradient(135deg,#f0f4fa,#c9d8ec)] pr-1'
              : 'bg-[linear-gradient(135deg,#dbe6f3_0%,#bccee5_50%,#a9c0de_51%,#b4c9e4_100%)]'
          }`}
        >
          {app.icon}
        </button>
      ))}
    </div>

    <div className="ml-auto flex items-center">
      <svg width="16" height="16" viewBox="0 0 16 16" className="mb-1" aria-hidden="true">
        <rect x="1" y="1" width="14" height="14" rx="2" fill="#f04f10" transform="rotate(-8 8 8)" />
        <path d="M12 4C8 2.500 4 4 5 6.500s6 1 6 3.500-5 2.500-7 1" fill="none" stroke="#fff" strokeWidth="2" />
      </svg>
      <svg width="9" height="18" viewBox="0 0 9 18" className="mb-2 ml-[9px]" aria-hidden="true">
        <path d="M3 3V1h5v3H6M1 3.500h5v3H1z" fill="none" stroke="#fff" />
        <path d="M2 14h5l-2.500 3z" fill="#fff" />
      </svg>
      <div className="ml-2 flex gap-2">
        {tray.map((item) => (
          <button key={item.name} aria-label={item.name} className="flex size-4 items-center justify-center">
            {item.logo ? (
              item.icon
            ) : (
              <svg width="16" height="16" viewBox="0 0 16 16" aria-hidden="true">
                {item.icon}
              </svg>
            )}
          </button>
        ))}
      </div>
      <div className="ml-[9px] w-[112px] text-center text-xs leading-[18px] text-white">
        <div>11:18</div>
        <div>2020/11/24 星期二</div>
      </div>
      <button
        aria-label="显示桌面"
        className="ml-[2px] h-full w-[15px] border border-[#36424f] bg-[linear-gradient(160deg,#97a3b1,#596878_50%,#8492a3)] shadow-[inset_0_0_0_1px_rgba(255,255,255,0.3)]"
      />
    </div>
  </footer>
);

/* ---------- overlays ---------- */

const Watermark = () => (
  <div className="pointer-events-none absolute bottom-[40px] right-[97px] z-30 w-[350px] text-white opacity-75 [text-shadow:0_0_3px_rgba(0,0,0,0.45)]">
    <div className="flex h-[110px] items-end">
      <span className="w-[118px] pl-[2px] font-['Liberation_Sans',sans-serif] text-[76px] font-bold leading-[68px] [-webkit-text-stroke:2px_#fff]">Bai</span>
      <svg width="104" height="112" viewBox="0 0 104 112" aria-hidden="true" className="-ml-px shrink-0 drop-shadow-[0_0_2px_rgba(0,0,0,0.4)]">
        <g fill="#fff">
          <ellipse cx="15" cy="43" rx="13" ry="16" />
          <ellipse cx="40" cy="19" rx="12" ry="17" />
          <ellipse cx="70" cy="21" rx="13" ry="16" />
          <ellipse cx="89" cy="50" rx="13" ry="16" />
          <path d="M52 46c9 0 13 7 19 15s23 18 23 33c0 12-11 17-21 16-8-1-13-2-21-2s-13 2-21 2c-12 0-21-6-21-17 0-14 15-23 22-32S43 46 52 46z" />
        </g>
        <text x="52" y="99" textAnchor="middle" fontSize="50" fontFamily="Liberation Sans, sans-serif" fill="#eee" stroke="#b0b0b0" strokeWidth="2">
          du
        </text>
      </svg>
      <span className="ml-px whitespace-nowrap text-[58px] font-black leading-[66px] [-webkit-text-stroke:1px_#fff]">经验</span>
    </div>
    <div className="pb-1 pl-[3px] font-['Noto_Sans',sans-serif] text-[40px] leading-[48px]">jingyan.baidu.com</div>
  </div>
);

const LevelMeter = () => (
  <div className="absolute bottom-[75px] right-0 z-30 flex h-[59px] w-[10px] items-center justify-center rounded-l border border-r-0 border-[#34343f] bg-[#50546a]">
    <div className="flex h-[46px] w-1 flex-col justify-end bg-[repeating-linear-gradient(0deg,transparent_0,transparent_1px,#2c2f3b_1px,#2c2f3b_3px)]">
      <div className="h-4 bg-[repeating-linear-gradient(0deg,#6fd9bd_0,#6fd9bd_2px,#50546a_2px,#50546a_3px)]" />
    </div>
  </div>
);

const App = () => (
  <div className="relative flex h-screen flex-col overflow-hidden bg-[#e1e1e1] font-['Noto_Sans_CJK_SC',sans-serif]">
    <TitleBar />
    <MenuBar />
    <Ribbon />
    <div className="flex min-h-0 flex-1">
      <div className="flex min-w-0 flex-1 overflow-hidden">
        <Page />
      </div>
      <ScrollBar />
      <SidePanel />
    </div>
    <StatusBar />
    <Taskbar />
    <Watermark />
    <LevelMeter />
  </div>
);

export default App;
